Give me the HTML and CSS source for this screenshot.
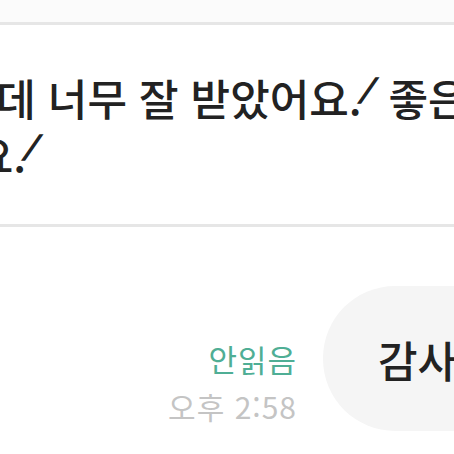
FILE: index.html
```html
<!DOCTYPE html>
<html lang="ko">
<head>
    <meta charset="UTF-8">
    <meta name="viewport" content="width=device-width, initial-scale=1.0">
    <title>채팅</title>
    <link rel="stylesheet" href="styles.css">
</head>
<body>

<div class="chat">
    <!-- 상단 후기 카드 -->
    <div class="top-gap"></div>
    <div class="review-card">
        <p class="review-text">
            <span class="line line-first">걱정했는데 너무 잘 받았어요.<span class="tick">/</span> 좋은 분이시네요</span>
            <span class="line line-second">감사해요.<span class="tick">/</span></span>
        </p>
    </div>

    <!-- 내 메시지 -->
    <div class="my-row">
        <div class="meta">
            <span class="unread">안읽음</span>
            <span class="time">오후 2:58</span>
        </div>
        <div class="bubble">감사합니다</div>
    </div>
</div>

</body>
</html>
```

FILE: styles.css
```css
html, body {
    margin: 0;
    padding: 0;
    background-color: #fff;
    overflow: hidden;
}
body {
    width: 454px;
    height: 454px;
    font-family: "Noto Sans CJK KR", "Noto Sans", sans-serif;
    color: #222;
}
.chat {
    width: 454px;
}
.top-gap {
    height: 22px;
    background-color: #fbfbfb;
}
.review-card {
    border-top: 3px solid #e6e6e6;
    border-bottom: 3px solid #e6e6e6;
    height: 205px;
    box-sizing: border-box;
    overflow: hidden;
}
.review-text {
    margin: 44px 0 0 0;
    font-size: 43px;
    font-weight: 500;
    line-height: 57px;
    white-space: nowrap;
}
.line {
    display: block;
}
.line-first {
    margin-left: -162px;
}
.line-second {
    margin-left: -145px;
}
.tick {
    display: inline-block;
    font-size: 25px;
    font-weight: 700;
    line-height: 1;
    -webkit-text-stroke: 1.6px #222;
    transform: skewX(-24deg);
    vertical-align: 16px;
    margin-left: 2px;
    margin-right: 3px;
}
.my-row {
    display: flex;
    align-items: flex-end;
    margin-top: 59px;
    padding-left: 147px;
    white-space: nowrap;
}
.meta {
    flex-shrink: 0;
    width: 150px;
    display: flex;
    flex-direction: column;
    align-items: flex-end;
    padding-bottom: 8px;
    margin-right: 26px;
}
.unread {
    color: #4fae95;
    font-size: 31px;
    letter-spacing: 1px;
    line-height: 42px;
    margin-bottom: 9px;
}
.time {
    color: #c4c4c4;
    font-size: 30px;
    letter-spacing: 1px;
    line-height: 34px;
}
.bubble {
    flex-shrink: 0;
    background-color: #f5f5f5;
    border-radius: 72px;
    height: 145px;
    padding: 0 40px 0 55px;
    display: flex;
    align-items: center;
    font-size: 43px;
    font-weight: 500;
}
```
